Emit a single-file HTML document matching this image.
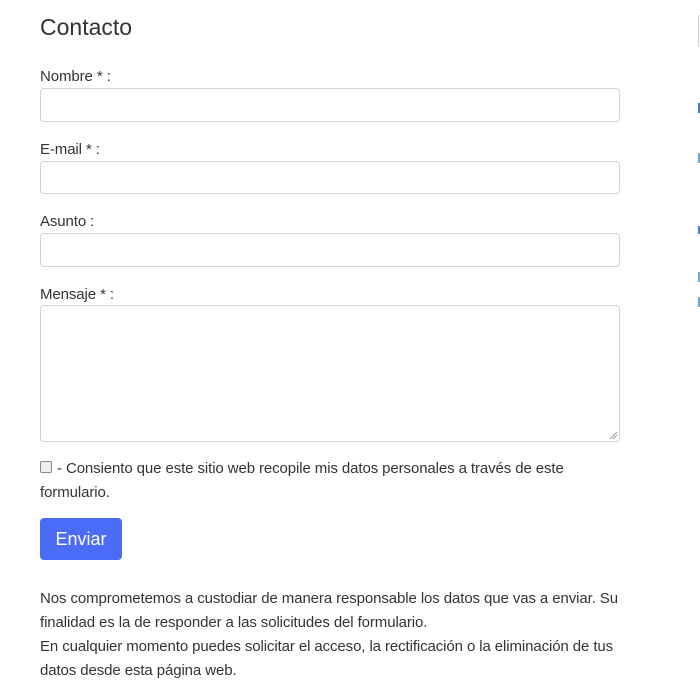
<!DOCTYPE html>
<html><head><meta charset="utf-8"><style>
body{margin:0;width:700px;height:700px;background:#fff;font-family:"Liberation Sans",sans-serif;color:#333;position:relative;overflow:hidden}
.a{position:absolute;white-space:nowrap}
.t{font-size:15px;letter-spacing:-0.1px;line-height:24px}
.in{position:absolute;left:40px;width:578px;border:1px solid #ced4da;border-radius:4px;background:#fff}
.m{position:absolute;left:698px;width:3px;background:#4a7cc0}
</style></head><body>
<div class="a" style="left:40px;top:14px;font-size:23px;color:#333">Contacto</div>
<div class="a t" style="left:40px;top:65px">Nombre * :</div>
<div class="in" style="top:88px;height:32px"></div>
<div class="a t" style="left:40px;top:138px">E-mail * :</div>
<div class="in" style="top:161px;height:31px"></div>
<div class="a t" style="left:40px;top:210px">Asunto :</div>
<div class="in" style="top:233px;height:32px"></div>
<div class="a t" style="left:40px;top:283px">Mensaje * :</div>
<div class="in" style="top:305px;height:135px"></div>
<svg class="a" style="left:608px;top:430px" width="10" height="10"><path d="M2 9L9 2M5 9L9 5" stroke="#999" stroke-width="1"/></svg>
<div class="a" style="left:40px;top:461px;width:10px;height:10px;border:1px solid #888;border-radius:2px;background:#eee"></div>
<div class="a t" style="left:57px;top:457px">- Consiento que este sitio web recopile mis datos personales a través de este</div>
<div class="a t" style="left:40px;top:481px">formulario.</div>
<div class="a" style="left:40px;top:518px;width:82px;height:42px;background:#4a6cf7;border-radius:4px;color:#fff;font-size:18px;line-height:42px;text-align:center">Enviar</div>
<div class="a t" style="left:40px;top:587px">Nos comprometemos a custodiar de manera responsable los datos que vas a enviar. Su</div>
<div class="a t" style="left:40px;top:611px">finalidad es la de responder a las solicitudes del formulario.</div>
<div class="a t" style="left:40px;top:635px">En cualquier momento puedes solicitar el acceso, la rectificación o la eliminación de tus</div>
<div class="a t" style="left:40px;top:659px">datos desde esta página web.</div>
<div class="a" style="left:698px;top:14px;width:10px;height:32px;border:1px solid #ccc;border-radius:4px"></div>
<div class="m" style="top:103px;height:10px"></div>
<div class="m" style="top:153px;height:10px;background:#6aa8d8"></div>
<div class="m" style="top:226px;height:8px"></div>
<div class="m" style="top:272px;height:10px;background:#6aa8d8"></div>
<div class="m" style="top:297px;height:10px;background:#6aa8d8"></div>
</body></html>
